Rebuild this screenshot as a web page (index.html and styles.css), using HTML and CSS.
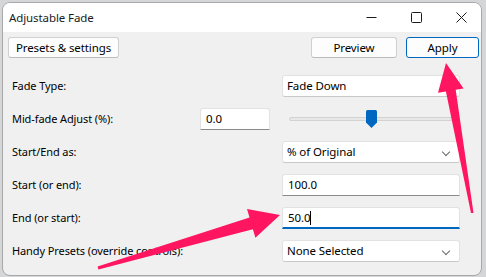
FILE: index.html
```html
<!DOCTYPE html>
<html lang="en">
<head>
    <meta charset="UTF-8">
    <title>Adjustable Fade</title>
    <link rel="stylesheet" href="styles.css">
</head>
<body>
    <div class="window">
        <div class="titlebar">
            <span class="title">Adjustable Fade</span>
            <div class="caption">
                <span class="cap-btn">
                    <svg width="11" height="11" viewBox="0 0 11 11"><path d="M0.5 5.5H10.5" stroke="#1b1b1b" stroke-width="1"/></svg>
                </span>
                <span class="cap-btn">
                    <svg width="11" height="11" viewBox="0 0 11 11"><rect x="0.5" y="0.5" width="10" height="10" rx="1" fill="none" stroke="#1b1b1b" stroke-width="1"/></svg>
                </span>
                <span class="cap-btn">
                    <svg width="11" height="11" viewBox="0 0 11 11"><path d="M0.5 0.5L10.5 10.5M10.5 0.5L0.5 10.5" stroke="#1b1b1b" stroke-width="1"/></svg>
                </span>
            </div>
        </div>

        <div class="content">
            <div class="toolbar">
                <button class="btn presets">Presets &amp; settings</button>
                <span class="spacer"></span>
                <button class="btn preview">Preview</button>
                <button class="btn apply">Apply</button>
            </div>

            <div class="form">
                <div class="row">
                    <span class="label">Fade Type:</span>
                    <div class="combo"><span>Fade Down</span><i class="chev"></i></div>
                </div>
                <div class="row">
                    <span class="label short">Mid-fade Adjust (%):</span>
                    <div class="field small"><span>0.0</span></div>
                    <div class="slider">
                        <div class="track"></div>
                        <svg class="thumb" width="11" height="18" viewBox="0 0 11 18"><path d="M1.5 0H9.5Q11 0 11 1.5V12.5L5.5 18L0 12.5V1.5Q0 0 1.5 0Z" fill="#0067c0"/></svg>
                    </div>
                </div>
                <div class="row">
                    <span class="label">Start/End as:</span>
                    <div class="combo"><span>% of Original</span><i class="chev"></i></div>
                </div>
                <div class="row">
                    <span class="label">Start (or end):</span>
                    <div class="field"><span>100.0</span></div>
                </div>
                <div class="row">
                    <span class="label">End (or start):</span>
                    <div class="field focused"><span>50.0</span><i class="caret"></i></div>
                </div>
                <div class="row">
                    <span class="label">Handy Presets (override controls):</span>
                    <div class="combo"><span>None Selected</span><i class="chev"></i></div>
                </div>
            </div>
        </div>

        <!-- annotation arrows drawn over the dialog -->
        <svg class="arrows" width="486" height="277" viewBox="0 0 486 277">
            <polygon points="446,63 463.6,88.4 455.7,89.7 473.5,213 471,213 445.9,91.5 438,92.8" fill="#ff1560"/>
            <polygon points="280,215 255.4,237.8 252.9,229.2 98.4,269.4 97.6,266.6 249.5,217.6 247,209" fill="#ff1560"/>
        </svg>
    </div>
</body>
</html>
```

FILE: styles.css
```css
*{
    box-sizing:border-box;
}
body{
    margin:0;
    background:#d4d6d8;
    font-family:"Noto Sans","Liberation Sans",sans-serif;
    font-size:11px;
    letter-spacing:-0.1px;
    color:#000;
}
.window{
    position:relative;
    margin:2px 0 0 2px;
    width:480px;
    height:274px;
    border:1px solid #a8a8a8;
    border-radius:8px;
    background:#f0f0f0;
    overflow:hidden;
}
.titlebar{
    display:flex;
    align-items:center;
    height:29px;
    background:#fff;
}
.title{
    padding-left:6px;
    flex:1;
    font-size:11.5px;
    color:#1a1a1a;
}
.caption{
    display:flex;
    margin-right:-3px;
}
.cap-btn{
    width:45px;
    height:29px;
    display:flex;
    align-items:center;
    justify-content:center;
}
.content{
    padding:5px 2px 0 5px;
}
.toolbar{
    display:flex;
    gap:9px;
}
.spacer{
    flex:1;
}
.btn{
    height:21px;
    padding:0;
    font-family:inherit;
    font-size:11.5px;
    letter-spacing:inherit;
    color:#000;
    background:#fdfdfd;
    border:1px solid #d0d0d0;
    border-bottom-color:#bcbcbc;
    border-radius:3px;
}
.presets{
    width:111px;
}
.preview{
    width:86px;
}
.apply{
    width:73px;
    border:1px solid #0067c0;
}
.form{
    padding:11px 0 0 4px;
}
.row{
    display:flex;
    align-items:center;
    height:33px;
}
.label{
    width:270px;
    flex:none;
}
.label.short{
    width:188px;
}
.combo,.field{
    position:relative;
    display:flex;
    align-items:center;
    width:178px;
    height:22px;
    padding-left:4px;
    font-size:11.5px;
    background:#fff;
    border:1px solid #e2e2e2;
    border-bottom-color:#c8c8c8;
    border-radius:3px;
}
.field{
    padding-left:5px;
    border-bottom-color:#8a8a8a;
    border-radius:3px 3px 0 0;
}
.field.small{
    width:70px;
}
.field.focused{
    border-bottom:2px solid #0067c0;
    padding-top:1px;
}
.caret{
    width:1px;
    height:14px;
    background:#000;
}
.chev{
    position:absolute;
    right:10px;
    top:7px;
    width:6px;
    height:6px;
    border-right:1px solid #6a6a6a;
    border-bottom:1px solid #6a6a6a;
    transform:rotate(45deg);
}
.slider{
    position:relative;
    margin-left:12px;
    width:178px;
    height:22px;
}
.track{
    position:absolute;
    left:7px;
    right:7px;
    top:9px;
    height:4px;
    background:#e8e8e8;
    border:1px solid #d2d2d2;
    border-radius:2px;
}
.thumb{
    position:absolute;
    left:84px;
    top:2px;
}
.arrows{
    position:absolute;
    left:-3px;
    top:-3px;
}
```
